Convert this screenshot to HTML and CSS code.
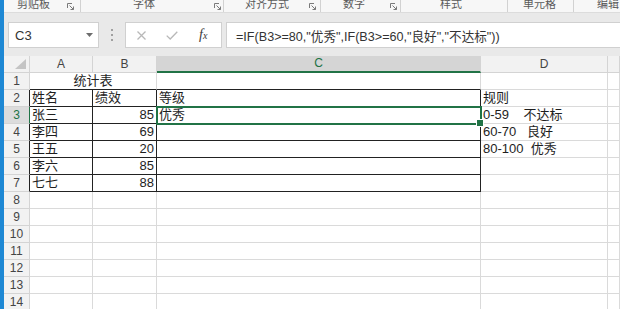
FILE: index.html
```html
<!DOCTYPE html>
<html lang="zh">
<head>
  <meta charset="UTF-8" />
  <title>统计表 - Excel</title>
  <link rel="stylesheet" href="styles.css">
</head>
<body>
  <div class="window">
    <div class="accent"></div>
    <div class="app">

      <div class="ribbon">
        <div class="group g1"><span class="label">剪贴板</span><svg class="launch" width="7" height="7" viewBox="0 0 7 7"><path d="M0.5 5V0.5H5M2.5 2.5L6.5 6.5M6.5 3.5V6.5H3.5" fill="none" stroke="#7a7a7a" stroke-width="1"/></svg></div>
        <div class="group g2"><span class="label">字体</span><svg class="launch" width="7" height="7" viewBox="0 0 7 7"><path d="M0.5 5V0.5H5M2.5 2.5L6.5 6.5M6.5 3.5V6.5H3.5" fill="none" stroke="#7a7a7a" stroke-width="1"/></svg></div>
        <div class="group g3"><span class="label">对齐方式</span><svg class="launch" width="7" height="7" viewBox="0 0 7 7"><path d="M0.5 5V0.5H5M2.5 2.5L6.5 6.5M6.5 3.5V6.5H3.5" fill="none" stroke="#7a7a7a" stroke-width="1"/></svg></div>
        <div class="group g4"><span class="label">数字</span><svg class="launch" width="7" height="7" viewBox="0 0 7 7"><path d="M0.5 5V0.5H5M2.5 2.5L6.5 6.5M6.5 3.5V6.5H3.5" fill="none" stroke="#7a7a7a" stroke-width="1"/></svg></div>
        <div class="group g5"><span class="label">样式</span></div>
        <div class="group g6"><span class="label">单元格</span></div>
        <div class="group g7"><span class="label">编辑</span></div>
      </div>

      <div class="fbar">
        <div class="namebox">
          <span>C3</span>
          <svg class="drop" width="7" height="4" viewBox="0 0 7 4"><path d="M0 0H7L3.5 4Z" fill="#6d6d6d"/></svg>
        </div>
        <div class="grip">
          <svg width="2" height="12" viewBox="0 0 2 12"><rect x="0" y="0" width="2" height="2" fill="#a0a0a0"/><rect x="0" y="5" width="2" height="2" fill="#a0a0a0"/><rect x="0" y="10" width="2" height="2" fill="#a0a0a0"/></svg>
        </div>
        <div class="btns">
          <svg class="cancel" width="9" height="9" viewBox="0 0 9 9"><path d="M0.5 0.5L8.5 8.5M8.5 0.5L0.5 8.5" stroke="#b8b8b8" stroke-width="1.3"/></svg>
          <svg class="enter" width="12" height="9" viewBox="0 0 12 9"><path d="M0.7 4.6L4.2 8L11.3 0.7" fill="none" stroke="#b8b8b8" stroke-width="1.3"/></svg>
          <span class="fx">f<small>x</small></span>
        </div>
        <div class="formula">=IF(B3&gt;=80,"优秀",IF(B3&gt;=60,"良好","不达标"))</div>
      </div>

      <div class="sheet">
        <div class="row head">
          <div class="corner"><svg width="11" height="10" viewBox="0 0 11 10"><path d="M11 0V10H0Z" fill="#c4c4c4"/></svg></div>
          <div class="ch">A</div>
          <div class="ch">B</div>
          <div class="ch sel">C</div>
          <div class="ch">D</div>
          <div class="ch"></div>
        </div>

        <div class="row">
          <div class="rh">1</div>
          <div class="c span2 ctr bb">统计表</div>
          <div class="c bb"></div>
          <div class="c"></div>
          <div class="c"></div>
        </div>
        <div class="row">
          <div class="rh edge">2</div>
          <div class="c t">姓名</div>
          <div class="c t">绩效</div>
          <div class="c t">等级</div>
          <div class="c">规则</div>
          <div class="c"></div>
        </div>
        <div class="row">
          <div class="rh edge sel">3</div>
          <div class="c t">张三</div>
          <div class="c t num">85</div>
          <div class="c t active">优秀</div>
          <div class="c">0-59    不达标</div>
          <div class="c"></div>
        </div>
        <div class="row">
          <div class="rh edge">4</div>
          <div class="c t">李四</div>
          <div class="c t num">69</div>
          <div class="c t"></div>
          <div class="c">60-70   良好</div>
          <div class="c"></div>
        </div>
        <div class="row">
          <div class="rh edge">5</div>
          <div class="c t">王五</div>
          <div class="c t num">20</div>
          <div class="c t"></div>
          <div class="c">80-100  优秀</div>
          <div class="c"></div>
        </div>
        <div class="row">
          <div class="rh edge">6</div>
          <div class="c t">李六</div>
          <div class="c t num">85</div>
          <div class="c t"></div>
          <div class="c"></div>
          <div class="c"></div>
        </div>
        <div class="row">
          <div class="rh edge">7</div>
          <div class="c t">七七</div>
          <div class="c t num">88</div>
          <div class="c t"></div>
          <div class="c"></div>
          <div class="c"></div>
        </div>
        <div class="row">
          <div class="rh">8</div>
          <div class="c"></div><div class="c"></div><div class="c"></div><div class="c"></div><div class="c"></div>
        </div>
        <div class="row">
          <div class="rh">9</div>
          <div class="c"></div><div class="c"></div><div class="c"></div><div class="c"></div><div class="c"></div>
        </div>
        <div class="row">
          <div class="rh">10</div>
          <div class="c"></div><div class="c"></div><div class="c"></div><div class="c"></div><div class="c"></div>
        </div>
        <div class="row">
          <div class="rh">11</div>
          <div class="c"></div><div class="c"></div><div class="c"></div><div class="c"></div><div class="c"></div>
        </div>
        <div class="row">
          <div class="rh">12</div>
          <div class="c"></div><div class="c"></div><div class="c"></div><div class="c"></div><div class="c"></div>
        </div>
        <div class="row">
          <div class="rh">13</div>
          <div class="c"></div><div class="c"></div><div class="c"></div><div class="c"></div><div class="c"></div>
        </div>
        <div class="row">
          <div class="rh">14</div>
          <div class="c"></div><div class="c"></div><div class="c"></div><div class="c"></div><div class="c"></div>
        </div>
      </div>

    </div>
  </div>
</body>
</html>
```

FILE: styles.css
```css
:root {
  --green: #217346;
  --grid: #dadada;
  --head-bg: #f2f2f2;
  --head-line: #d4d4d4;
  --ink: #1e1e1e;
}

* {
  box-sizing: border-box;
}

body {
  margin: 0;
  font-family: 'Liberation Sans', 'Noto Sans CJK SC', sans-serif;
  color: var(--ink);
  background: #fff;
  overflow: hidden;
}

.window {
  display: flex;
  height: 309px;
  overflow: hidden;
}

.accent {
  width: 4px;
  flex-shrink: 0;
  background: #1e88d4;
}

.app {
  flex: 1;
  min-width: 0;
  overflow: hidden;
}

/* ribbon group captions */
.ribbon {
  display: flex;
  height: 13px;
  background: #f7f7f7;
  border-bottom: 1px solid #dcdcdc;
  overflow: hidden;
}

.group {
  display: flex;
  align-items: flex-start;
  height: 12px;
  border-right: 1px solid #d2d2d2;
  flex-shrink: 0;
}

.label {
  display: block;
  margin-top: -1px;
  font-size: 11px;
  line-height: 11px;
  color: #5a5a5a;
  white-space: nowrap;
}

.launch {
  margin-left: auto;
  margin-top: 3px;
}

.g1 { width: 77px; padding-left: 13px; }
.g1 .launch { margin-right: 6px; }
.g2 { width: 143px; padding-left: 52px; }
.g2 .launch { margin-right: 2px; }
.g3 { width: 97px; padding-left: 21px; }
.g3 .launch { margin-right: 4px; }
.g4 { width: 80px; padding-left: 22px; }
.g4 .launch { margin-right: 3px; }
.g5 { width: 107px; padding-left: 39px; }
.g6 { width: 66px; padding-left: 15px; }
.g7 { flex: 1; padding-left: 23px; border-right: none; }

/* formula bar */
.fbar {
  display: flex;
  align-items: center;
  height: 43px;
  padding: 9px 0 8px 4px;
  background: #e9e9e9;
}

.namebox,
.btns,
.formula {
  height: 26px;
  background: #fff;
  border: 1px solid #d0d0d0;
  display: flex;
  align-items: center;
}

.namebox {
  width: 91px;
  padding-left: 6px;
  font-size: 13px;
  color: #333;
}

.namebox .drop {
  margin-left: auto;
  margin-right: 5px;
}

.grip {
  width: 26px;
  display: flex;
  justify-content: center;
}

.btns {
  width: 97px;
  padding-left: 11px;
}

.btns .enter {
  margin-left: 20px;
}

.fx {
  margin-left: 21px;
  font-family: 'Liberation Serif', serif;
  font-style: italic;
  font-size: 14px;
  color: #3a3a3a;
}

.fx small {
  font-size: 10px;
}

.formula {
  flex: 1;
  margin-left: 4px;
  margin-right: -2px;
  padding-left: 9px;
  font-size: 12.6px;
  color: #333;
  white-space: nowrap;
}

/* sheet grid */
.row {
  display: grid;
  grid-template-columns: 26px 63px 64px 324px 127px 1fr;
  height: 17px;
  font-size: 13px;
  line-height: 16px;
}

.corner,
.ch,
.rh {
  background: var(--head-bg);
  border-right: 1px solid var(--head-line);
  border-bottom: 1px solid var(--head-line);
  text-align: center;
  font-size: 12px;
  color: #444;
}

.corner {
  display: flex;
  align-items: flex-end;
  justify-content: flex-end;
  padding: 0 3px 3px 0;
}

.ch.sel {
  background: #d5d5d5;
  color: var(--green);
  border-bottom: 2px solid var(--green);
  line-height: 15px;
}

.rh.edge {
  border-right-color: #222;
}

.rh.sel {
  background: #dcdcdc;
  color: var(--green);
  border-right-color: var(--green);
}

.c {
  border-right: 1px solid var(--grid);
  border-bottom: 1px solid var(--grid);
  padding: 0 2px;
  white-space: pre;
  overflow: hidden;
}

.c.span2 {
  grid-column: span 2;
}

.c.ctr {
  text-align: center;
}

.c.num {
  text-align: right;
}

.c.bb {
  border-bottom-color: #222;
}

.c.t {
  border-right-color: #222;
  border-bottom-color: #222;
}

.c.active {
  position: relative;
  z-index: 1;
  overflow: visible;
  outline: 2px solid var(--green);
  outline-offset: -1px;
}

.c.active::after {
  content: "";
  position: absolute;
  right: -4px;
  bottom: -4px;
  width: 6px;
  height: 6px;
  background: var(--green);
  border: 1px solid #fff;
}
```
